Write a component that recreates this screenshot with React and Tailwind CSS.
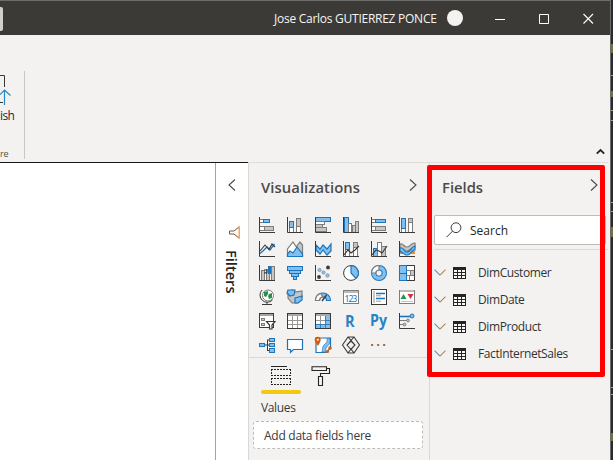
import React from "react";

const DARK = "#3b3a39";
const BLUE = "#1b75bc";
const SKY = "#83beec";
const GREY = "#c8c6c4";
const MID = "#7f7d7b";

const Box = ({ x, y, w, h, f = "#fff", s = MID }) => (
  <rect x={x + 0.5} y={y + 0.5} width={w - 1} height={h - 1} fill={f} stroke={s} />
);
const Blue = (p) => <Box f={SKY} s={BLUE} {...p} />;
const Grey = (p) => <Box f={GREY} s={MID} {...p} />;
const White = (p) => <Box f="#fff" s={MID} {...p} />;
const Axes = () => <path d="M.5 0V15.5H16" fill="none" stroke={DARK} />;
const Line = ({ d, s = DARK, w = 1.2, f = "none" }) => (
  <path d={d} fill={f} stroke={s} strokeWidth={w} />
);

const visuals = [
  <><White x={0} y={2} w={5} h={4} /><Blue x={4} y={2} w={7} h={4} /><White x={0} y={9} w={6} h={5} /><Grey x={5} y={9} w={10} h={5} /><Axes /></>,
  <><White x={2} y={10} w={5} h={6} /><Blue x={2} y={4} w={5} h={7} /><White x={9} y={8} w={5} h={8} /><Grey x={9} y={1} w={5} h={9} /><Axes /></>,
  <><Blue x={0} y={0} w={16} h={5} /><White x={0} y={4} w={10} h={4} /><Grey x={0} y={7} w={8} h={4} /><Grey x={0} y={10} w={12} h={5} /><Axes /></>,
  <><Blue x={1} y={0} w={5} h={16} /><White x={5} y={6} w={4} h={10} /><Grey x={9} y={8} w={4} h={8} /><Grey x={12} y={4} w={4} h={12} /><Axes /></>,
  <><White x={0} y={2} w={5} h={4} /><Blue x={4} y={2} w={11} h={4} /><White x={0} y={9} w={5} h={5} /><Grey x={4} y={9} w={11} h={5} /><Axes /></>,
  <><White x={2} y={11} w={5} h={5} /><Blue x={2} y={1} w={5} h={11} /><White x={9} y={5} w={5} h={11} /><Grey x={9} y={1} w={5} h={5} /><Axes /></>,
  <><Line d="M1 12.5 4 10 8 6 11 9 15.5 3" s={BLUE} w={1.3} /><Line d="M1 10 6 4 10 8.5 13 3 16 6" w={1.1} /><Axes /></>,
  <><Line d="M9 6 13 1 15.5 4V15.5H12Z" s={MID} f={GREY} /><Line d="M.5 15.5V8L6 1 10 7 12 15.5Z" s={MID} f="#fff" /><Line d="M.5 15.5V13L3 10 6 12 10 6 15.5 13V15.5Z" s={BLUE} f={SKY} /></>,
  <><Line d="M1 4 5 8 8 4 12 8 16 3V10L12 14 8 9 5 13 1 9Z" s={BLUE} f={SKY} /><Axes /></>,
  <><White x={2} y={8} w={5} h={8} /><Blue x={2} y={1} w={5} h={8} /><White x={10} y={6} w={5} h={10} /><Grey x={10} y={1} w={5} h={6} /><Line d="M1 14 5 9 8 12 12 9 16 5" /><Axes /></>,
  <><Blue x={2} y={7} w={5} h={9} /><White x={6} y={1} w={5} h={15} /><Grey x={10} y={5} w={5} h={11} /><Line d="M1 14 5 9 8 10 11 12 16 5" /><Axes /></>,
  <><rect x="1" y="10" width="15" height="3" fill="#f28c28" /><Line d="M1 3C5 2 4 6 8 6S11 2 16 2V6C12 6 11 10 8 10S5 7 1 7Z" s={MID} f={GREY} /><Line d="M1 7C5 5 5 13 9 11S13 5 16 5V9C13 8 12 14 8 14S4 10 1 11Z" s={BLUE} f={SKY} /><Axes /></>,
  <><Grey x={2} y={5} w={4} h={11} /><White x={5} y={7} w={3} h={9} /><Grey x={7} y={4} w={4} h={12} /><Grey x={12} y={1} w={4} h={15} /><Box x={9} y={1} w={3} h={8} f={BLUE} s={BLUE} /><path d="M5 5H8V8H5" fill="none" stroke={DARK} /><Axes /></>,
  <><Blue x={0} y={1} w={16} h={5} /><Blue x={2} y={5} w={12} h={4} /><Blue x={4} y={8} w={8} h={4} /><Blue x={6} y={11} w={4} h={4} /></>,
  <><circle cx="4.5" cy="5" r="1.7" fill={SKY} stroke={MID} strokeWidth=".5" /><circle cx="13" cy="2.5" r="1.9" fill={DARK} /><circle cx="8.5" cy="7.5" r="1.7" fill={SKY} stroke={MID} strokeWidth=".5" /><circle cx="4" cy="12" r="1.9" fill={DARK} /><circle cx="12.5" cy="10.5" r="1.8" fill={SKY} stroke={MID} strokeWidth=".5" /><Axes /></>,
  <><circle cx="8" cy="8" r="7.4" fill="#fff" stroke={DARK} /><Line d="M8 .6A7.4 7.4 0 0 1 13 13.4L8 8Z" s={BLUE} f={SKY} /></>,
  <><circle cx="8" cy="8" r="5.3" fill="none" stroke={BLUE} strokeWidth="5.4" /><circle cx="8" cy="8" r="5.3" fill="none" stroke={SKY} strokeWidth="3.4" /><Line d="M8 .5A7.5 7.5 0 0 0 .5 8L4.5 8A4 4 0 0 1 8 5Z" s={MID} f="#fff" /></>,
  <><White x={7} y={0} w={9} h={6} /><White x={7} y={5} w={5} h={6} /><Grey x={11} y={5} w={5} h={6} /><White x={7} y={10} w={4} h={6} /><White x={10} y={10} w={6} h={6} /><path d="M7 .5H15.5V15.5H7" fill="none" stroke={DARK} /><Blue x={0} y={0} w={8} h={9} /><Blue x={0} y={8} w={8} h={8} /></>,
  <><path d="M3 1A7.2 7.2 0 1 0 13.5 11" fill="none" stroke={DARK} /><circle cx="9" cy="6.5" r="5.5" fill="#fff" stroke={MID} /><path d="M5 3 9 2 9 5 7 8 5 7ZM10 5 13 4 13 9 10 10 9 7Z" fill="#239347" /><path d="M8 13V15M3 15.5H13" stroke={DARK} /></>,
  <><Line d="M1 2 6 1 8 3 15 2V8L11 14H5L1 9Z" s={MID} f={GREY} /><Line d="M1 1H8L7 6 3 7 0 4Z" s={BLUE} f={SKY} /><Line d="M8 9 15 7V11L11 14 8 14Z" s={BLUE} f={SKY} /></>,
  <><Line d="M.5 11.5A7.5 7.5 0 0 1 15.5 11.5H11.5A3.5 3.5 0 0 0 4.5 11.5Z" s={BLUE} f={SKY} /><Line d="M.5 11.5A7.5 7.5 0 0 1 6 4.3L7.5 8A3.5 3.5 0 0 0 4.5 11.5Z" s={MID} f="#fff" /><Line d="M7 12 11.5 6" w={1.4} /></>,
  <><Box x={0} y={1} w={16} h={14} s={MID} /><rect x="1" y="2" width="14" height="2" fill="#bcbab8" /><text x="1.6" y="12.5" fontSize="8.8" textLength="12.8" fontFamily="Noto Sans, sans-serif" fill={BLUE}>123</text></>,
  <><Box x={0} y={0} w={16} h={16} s={DARK} /><rect x="2" y="2" width="2" height="12" fill={GREY} /><path d="M5 4.5H14M5 9.5H14" stroke={BLUE} strokeWidth="1.6" /><path d="M5 6.8H10M5 12.2H10" stroke={MID} strokeWidth=".8" /></>,
  <><Box x={0} y={1} w={16} h={14} s={MID} /><rect x="1" y="1" width="14" height="2" fill="#bcbab8" /><path d="M1.5 10 4.5 5 7.5 10Z" fill="#239347" /><path d="M8.5 5H14.5L11.5 10Z" fill="#d13438" /><path d="M2 12.5H14" stroke={GREY} /></>,
  <><Box x={0} y={0} w={15} h={15} s={DARK} /><rect x="1" y="1" width="13" height="2" fill="#a5a3a1" /><Grey x={2} y={5} w={4} h={3} /><Grey x={2} y={10} w={4} h={3} /><Line d="M7.5 8.5H16L13 12V16H10.5V12Z" f="#fff" s={DARK} /></>,
  <><Box x={0} y={0} w={16} h={16} s={DARK} /><rect x="1" y="1" width="14" height="2" fill="#aaa8a6" /><path d="M1 7.5H15M1 11.5H15M5.5 3V15M10.5 3V15" stroke="#989694" /></>,
  <><Box x={0} y={0} w={16} h={16} s={DARK} /><rect x="1" y="1" width="14" height="2" fill="#aaa8a6" /><rect x="10" y="3" width="5" height="12" fill={SKY} /><rect x="1" y="11" width="14" height="4" fill={SKY} /><path d="M1 7.5H10M5.5 3V11" stroke="#989694" /><path d="M10 7.5H15M1 11.5H15M5.5 11V15M10.5 3V15" stroke={BLUE} strokeWidth=".8" /></>,
  <text x="2" y="14" fontSize="16" fontWeight="700" textLength="9.6" lengthAdjust="spacingAndGlyphs" fontFamily="Open Sans, sans-serif" fill="#2484c6">R</text>,
  <text x="-1" y="13" fontSize="16" fontWeight="700" textLength="17" lengthAdjust="spacingAndGlyphs" fontFamily="Open Sans, sans-serif" fill="#2484c6">Py</text>,
  <><Axes /><path d="M1 3.5H11" stroke={BLUE} strokeWidth="1.6" /><circle cx="13" cy="3" r="2" fill={SKY} stroke={BLUE} /><path d="M1 7.5H8M1 11.5H5" stroke={MID} /><circle cx="9" cy="7.5" r="1.4" fill={GREY} stroke={MID} /><circle cx="5.5" cy="11.5" r="1.4" fill={GREY} stroke={MID} /></>,
  <><path d="M5 8H11M8.5 3V13.5M8 3H11M8 13.5H11" fill="none" stroke={DARK} /><Blue x={0} y={6} w={6} h={4} /><Blue x={10} y={1} w={6} h={4} /><Blue x={10} y={6} w={6} h={4} /><Blue x={10} y={11} w={6} h={5} /></>,
  <Line d="M.5 2.5H15.5V12.5H6.5L3.5 15.3V12.5H.5Z" s={BLUE} f="#fff" />,
  <><Line d="M1 1H15.5V11L11 15.5H1Z" s={BLUE} f="#fff" /><path d="M7 15 8 9 12 5V1.5H15V6L11 11V15Z" fill={SKY} stroke={BLUE} strokeWidth=".6" /><path d="M3 9C1 6-.3 4.7-.3 3A3 3 0 0 1 5.7 2.5C5.7 5 4 7 3 9Z" fill="#d85c0a" /><circle cx="2.8" cy="2.8" r="1" fill="#fff" /><circle cx="15" cy="11" r="1.8" fill="#d85c0a" /><circle cx="12.5" cy="14.5" r="1.6" fill="#d85c0a" /></>,
  <Line d="M5 0H11L16.5 8 11 16H5L-.5 8ZM5 0 12 8 8 12.5 4 8 11 0M8 4 4 8M12 8 8 12 11 16M12 8 8 4M8 12 5 16" w={1.1} />,
  <><rect x="0" y="7" width="2" height="2" fill="#c8742a" /><rect x="6" y="7" width="2" height="2" fill="#c8742a" /><rect x="12" y="7" width="2" height="2" fill="#c8742a" /><path d="M1.8 7V9M7.8 7V9M13.8 7V9" stroke="#405eaa" strokeWidth=".5" /></>,
];

function VisualIcon({ children }) {
  return <svg className="size-4 overflow-visible" viewBox="0 0 16 16">{children}</svg>;
}

function Chevron({ left = false }) {
  return (
    <svg className="block h-[12px] w-2 shrink-0 overflow-visible" viewBox="0 0 8 12" fill="none" stroke="#4a494b" strokeWidth="1.1">
      <path d={left ? "M7 .5 1 6 7 11.5" : "M1 .5 7 6 1 11.5"} />
    </svg>
  );
}

function TitleBar() {
  return (
    <header className="flex h-[35px] shrink-0 items-center border-t border-[#6d6c6a] bg-[#3b3a37] text-[#f6f5f4]">
      <div className="mt-px h-6 w-[3px] rounded-r-[2px] bg-[#d1cfcd]" />
      <div className="ml-[271px] w-[173px] whitespace-nowrap pt-px text-[12px] leading-4 tracking-[-0.26px]">
        Jose Carlos GUTIERREZ PONCE
      </div>
      <div className="size-4 rounded-full bg-[#f3f2f1]" />
      <svg className="ml-8 h-3 w-[100px]" viewBox="0 0 100 12" fill="none" stroke="#fff">
        <path d="M0 7.5H10M44.5 2.5H53.5V11.5H44.5Z" />
        <path d="M88.5 2 98 11.5M98 2 88.5 11.5" strokeWidth="1.1" />
      </svg>
    </header>
  );
}

function Ribbon() {
  return (
    <div className="flex h-[127px] shrink-0 justify-between">
      <div className="flex h-[124px] w-6 flex-col pt-[39px]">
        <svg className="h-8 w-3 shrink-0" viewBox="0 0 12 32" fill="none">
          <path d="M0 1.5H4.5V13M0 28.5H3" stroke={DARK} />
          <path d="M4.5 31V16M-1 21.5 4.5 16 10.5 21.5" stroke="#2588c8" strokeWidth="1.2" />
        </svg>
        <div className="mt-[2px] h-4 text-[12px] leading-4 tracking-[-0.6px] text-[#302434]">ish</div>
        <div className="mt-[24px] h-3 w-3 text-[9px] leading-3 tracking-[-0.3px] text-[#504f4d]">re</div>
      </div>
      <div className="mt-9 h-[88px] w-px bg-[#c9c7c5]" />
      <div className="flex flex-1 items-end justify-end pb-[7px] pr-[5px]">
        <svg className="h-[7px] w-[9px]" viewBox="0 0 9 7" fill="none" stroke="#252423" strokeWidth="1.8">
          <path d="M.8 5.7 4.5 2 8.2 5.7" />
        </svg>
      </div>
    </div>
  );
}

function FiltersPane() {
  return (
    <aside className="flex w-[33px] shrink-0 flex-col items-center border-l border-[#a5a3a1] bg-white pt-[16px]">
      <Chevron left />
      <svg className="ml-[3px] mt-[35px] h-[14px] w-3" viewBox="0 0 12 14" fill="none">
        <path d="M11 1 6 5H1.5V8H6L11 12" stroke="#6e564c" />
        <path d="M8 3.5 11.2 1V12L8 9.5" stroke="#e8934a" strokeWidth="1.2" />
      </svg>
      <div className="mt-[10px] text-[14.6px] leading-4 font-semibold tracking-[0px] text-[#252423] [writing-mode:vertical-rl]">
        Filters
      </div>
    </aside>
  );
}

function Visualizations() {
  return (
    <section className="w-[181px] shrink-0 border-l border-[#dad8d6]">
      <div className="flex h-[54px] items-start justify-between pl-3 pr-3 pt-[15px]">
        <h2 className="text-[14.8px] leading-[19px] font-semibold tracking-[0.07px] text-[#4b4a49]">Visualizations</h2>
        <div className="mt-px"><Chevron /></div>
      </div>
      <div className="ml-[10px] grid w-[156px] grid-cols-6 gap-x-3 gap-y-2">
        {visuals.map((v, i) => <VisualIcon key={i}>{v}</VisualIcon>)}
      </div>
      <div className="mt-1 h-[41px] border-t border-[#dad8d6] pl-3 pt-[8px]">
        <div className="flex gap-5">
          <svg className="ml-[10px] h-[21px] w-5" viewBox="0 0 20 21" fill="none" stroke="#252423">
            <path d="M0 .5H16" />
            <path d="M0 3.5H20M0 9.5H20M0 12.5H20M0 18.5H20M.5 3V10M19.5 3V10M.5 12V19M19.5 12V19" strokeDasharray="2 1" />
          </svg>
          <svg className="h-[21px] w-5" viewBox="0 0 20 21" fill="none" stroke="#252423" strokeWidth="1.1">
            <path d="M1 .8H15.5V4.5H1ZM15.5 2.5H18.5V7.5H9.5V11M7.5 10.5H11.5V19.5H7.5Z" />
          </svg>
        </div>
        <div className="mt-[3px] h-1 w-10 rounded-full bg-[#f2c811]" />
      </div>
      <div className="ml-3 h-5 text-[12px] leading-5 tracking-[-0.35px] text-[#3b3a39]">Values</div>
      <div className="ml-1 mt-[3px] h-7 w-[170px] rounded-[3px] border border-dashed border-[#bebcba] bg-white pl-[10px] text-[12px] leading-[28px] tracking-[-0.26px] text-[#3b3a39]">
        Add data fields here
      </div>
    </section>
  );
}

function TableRow({ name }) {
  return (
    <li className="flex h-[27px] items-center">
      <svg className="h-[7px] w-3" viewBox="0 0 12 7" fill="none" strokeWidth="1.1">
        <path d="M.5.7 6 6.2" stroke="#5f8fb4" />
        <path d="M6 6.2 11.5.7" stroke="#b08352" />
      </svg>
      <svg className="ml-[7px] h-3 w-[13px]" viewBox="0 0 13 12" shapeRendering="crispEdges">
        <path d="M0 0H13V12H0Z" fill="#252423" />
        <path d="M1 3H4V5H1ZM5 3H8V5H5ZM9 3H12V5H9ZM1 6H4V8H1ZM5 6H8V8H5ZM9 6H12V8H9ZM1 9H4V11H1ZM5 9H8V11H5ZM9 9H12V11H9Z" fill="#f8f7f6" />
      </svg>
      <span className="ml-3 text-[12px] tracking-[-0.4px] text-[#333231]">{name}</span>
    </li>
  );
}

function Fields() {
  return (
    <section className="min-w-0 flex-1 border-l border-[#dad8d6]">
      <div className="flex h-[52px] items-start justify-between pl-3 pr-[10px] pt-[15px]">
        <h2 className="text-[14.8px] leading-[19px] font-semibold tracking-[0px] text-[#4b4a49]">Fields</h2>
        <div className="mt-px"><Chevron /></div>
      </div>
      <div className="ml-1 flex h-[30px] w-[172px] items-center rounded-[2px] border border-[#bebcba] bg-white pl-[11px]">
        <svg className="size-4" viewBox="0 0 16 16" fill="none" stroke="#3b3a39">
          <circle cx="10" cy="5.7" r="4.9" /><path d="M6.5 9.2.5 15.2" />
        </svg>
        <span className="ml-2 pt-[2px] text-[12px] tracking-[0px] text-[#252423]">Search</span>
      </div>
      <ul className="ml-1 mt-1 border-t border-[#dad8d6] pt-[9px]">
        <TableRow name="DimCustomer" />
        <TableRow name="DimDate" />
        <TableRow name="DimProduct" />
        <TableRow name="FactInternetSales" />
      </ul>
    </section>
  );
}

export default function App() {
  return (
    <div className="relative flex h-[460px] w-[613px] overflow-hidden bg-[#232c33] font-['Open_Sans','Noto_Sans',sans-serif]">
      <div className="flex w-[611px] flex-col border-r border-[#6d6c6a] bg-[#f3f2f1]">
        <TitleBar />
        <Ribbon />
        <main className="flex min-h-0 flex-1">
          <div className="flex w-[248px] shrink-0 border-t border-[#171717]">
            <div className="flex-1 bg-white" />
            <FiltersPane />
          </div>
          <div className="flex w-[360px] border-t border-[#e0dedc]">
            <Visualizations />
            <Fields />
          </div>
        </main>
      </div>
      <svg className="h-full w-[2px]" viewBox="0 0 2 460" preserveAspectRatio="none">
        <path d="M1 44V53M1 91V97M1 227V237M1 433V441" stroke="#9a8c45" strokeWidth="1.4" />
        <path d="M0 75.5H2M0 110.5H2M0 120.5H2M0 202.5H2M0 211.5H2M0 349.5H2M0 387.5H2M0 394.5H2" stroke="#a39e84" />
      </svg>
      <div className="absolute left-[427px] top-[165px] h-[212px] w-[178px] rounded-[2px] border-[5px] border-[#ff0000]" />
    </div>
  );
}
